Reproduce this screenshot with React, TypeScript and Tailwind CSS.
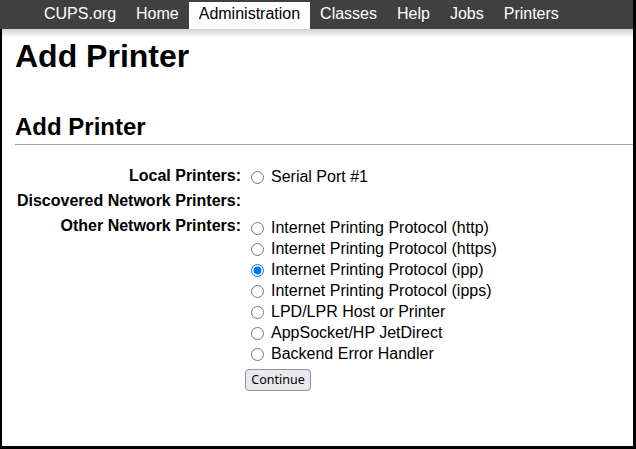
import React from 'react';

const navItems = ['CUPS.org', 'Home', 'Administration', 'Classes', 'Help', 'Jobs', 'Printers'];

const otherPrinters = [
  'Internet Printing Protocol (http)',
  'Internet Printing Protocol (https)',
  'Internet Printing Protocol (ipp)',
  'Internet Printing Protocol (ipps)',
  'LPD/LPR Host or Printer',
  'AppSocket/HP JetDirect',
  'Backend Error Handler',
];

function RadioLine({ label, checked = false }: { label: string; checked?: boolean }) {
  return (
    <label className="flex items-center h-[21px] leading-[21px]">
      <input
        type="radio"
        name="device"
        defaultChecked={checked}
        className="w-[13px] h-[13px] ml-[10px] mr-[7px] mt-[1px]"
      />
      <span>{label}</span>
    </label>
  );
}

export default function App() {
  return (
    <div
      className="w-[636px] h-[449px] flex flex-col bg-white text-black text-[16px] border-r-[3px] border-b-[3px] border-black overflow-hidden"
      style={{ fontFamily: '"Liberation Sans", Arial, sans-serif' }}
    >
      <nav className="flex h-[29px] pt-[2px] pl-[34px] bg-[#404040] shrink-0">
        {navItems.map((item) => (
          <a
            key={item}
            className={
              item === 'Administration'
                ? 'px-[10px] h-[27px] leading-[23px] bg-white text-black'
                : 'px-[10px] h-[27px] leading-[23px] text-white'
            }
          >
            {item}
          </a>
        ))}
      </nav>

      <div className="flex-1 flex flex-col border-l-2 border-black">
        <div className="h-[9px] bg-gradient-to-b from-[#d2d2d2] to-white shrink-0" />

        <div className="pl-[13px]">
          <h1 className="text-[32px] leading-[37px] font-bold">Add Printer</h1>

          <h2 className="mt-[38px] text-[24px] leading-[28px] font-bold pb-[3px] border-b border-[#a0a0a0]">
            Add Printer
          </h2>

          <form className="mt-[21px] grid grid-cols-[226px_1fr]">
            <div className="text-right font-bold leading-[18px] pt-[1px] h-[25px]">Local Printers:</div>
            <div>
              <RadioLine label="Serial Port #1" />
            </div>

            <div className="text-right font-bold leading-[18px] pt-[1px] whitespace-nowrap h-[25px]">
              Discovered Network Printers:
            </div>
            <div />

            <div className="text-right font-bold leading-[18px] pt-[1px]">Other Network Printers:</div>
            <div className="pt-[1px]">
              {otherPrinters.map((p) => (
                <RadioLine key={p} label={p} checked={p === 'Internet Printing Protocol (ipp)'} />
              ))}
              <button
                type="button"
                className="mt-[5px] ml-[4px] w-[66px] h-[22px] rounded-[4px] border border-[#8f8f9d] bg-[#e9e9ed] text-[12.5px] leading-[20px] text-black"
                style={{ fontFamily: '"Noto Sans", sans-serif' }}
              >
                Continue
              </button>
            </div>
          </form>
        </div>
      </div>
    </div>
  );
}
